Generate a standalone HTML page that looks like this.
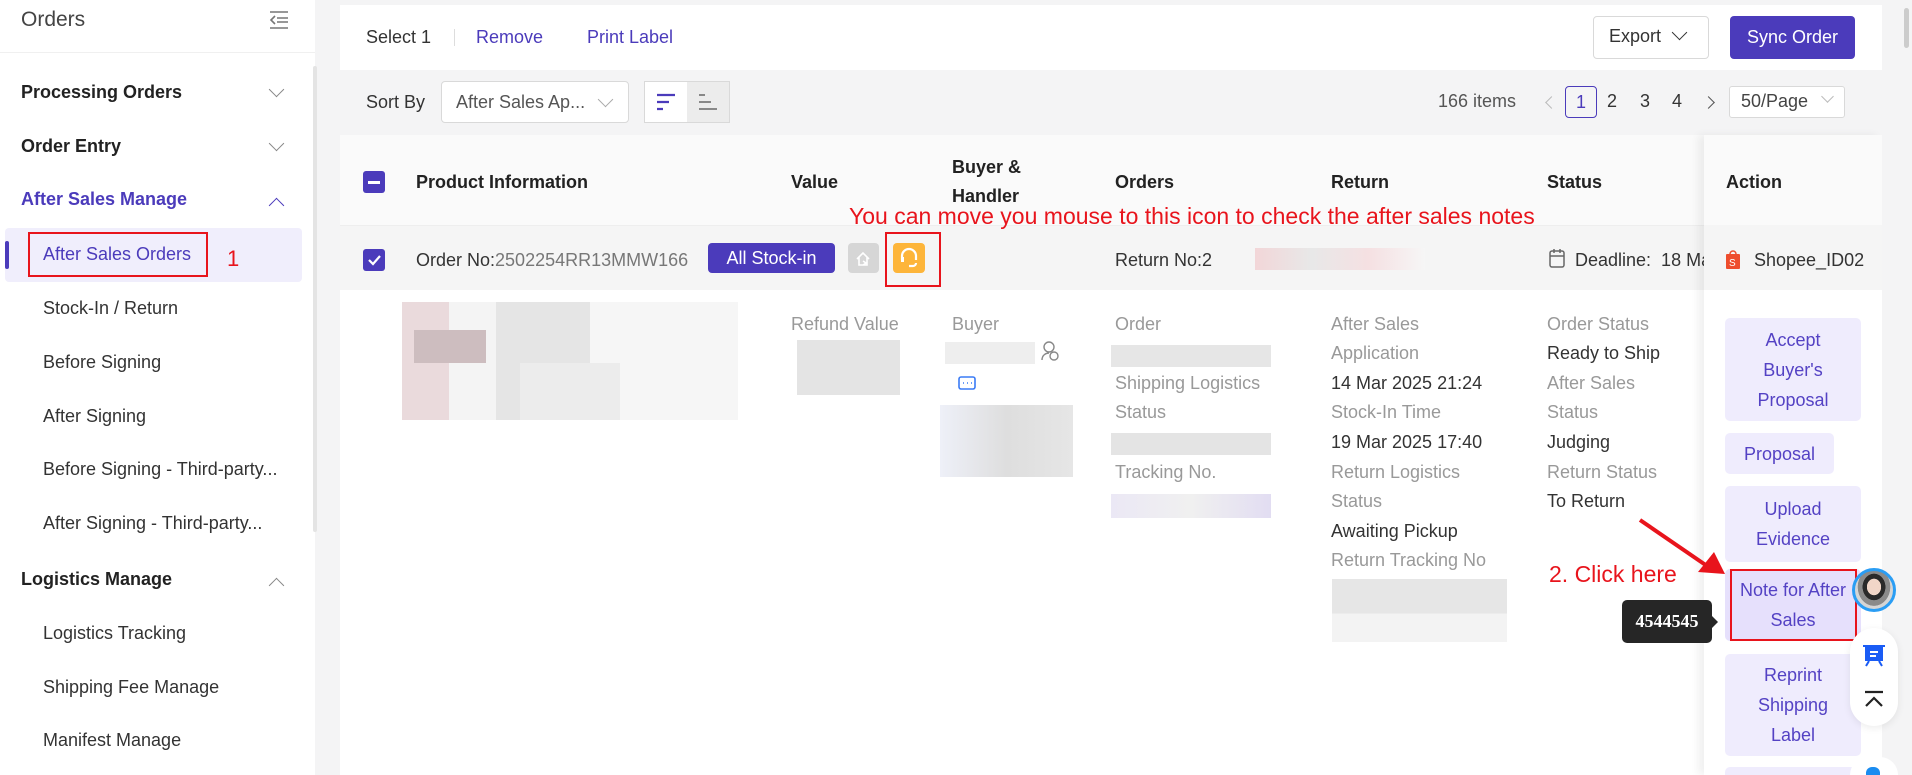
<!DOCTYPE html>
<html style="width:1912px;height:775px;overflow:hidden"><head><meta charset="utf-8">
<style>
*{margin:0;padding:0;box-sizing:border-box}
body{width:1912px;height:775px;overflow:hidden;background:#f4f4f5;font-family:"Liberation Sans",sans-serif;color:#333;position:relative;font-size:18px}
.a{position:absolute;white-space:nowrap}
.sb{position:absolute;left:0;top:0;width:315px;height:775px;background:#fff}
.grp{font-weight:bold;color:#222;font-size:18px}
.it{font-size:18px;color:#333}
.chev{position:absolute;width:11px;height:11px;border-right:1.6px solid #888;border-bottom:1.6px solid #888}
.lbl{color:#999;font-size:18px}
.val{color:#333;font-size:18px}
.btn{position:absolute;background:#efecfd;color:#5442c4;border-radius:5px;font-size:18px;text-align:center;line-height:30px;display:flex;align-items:center;justify-content:center;flex-direction:column}
.blur{position:absolute}
.red{color:#e8141c}
</style></head><body>

<div class="sb">
 <div class="a" style="left:21px;top:8px;font-size:21px;color:#444">Orders</div>
 <svg class="a" style="left:268px;top:10px" width="22" height="20" viewBox="0 0 22 20"><path d="M2 2h18M9 8h11M9 12h11M2 18h18M7 6l-4 4 4 4" stroke="#777" stroke-width="1.6" fill="none"/></svg>
 <div class="a" style="left:0;top:52px;width:315px;height:1px;background:#f0f0f0"></div>
 <div class="a" style="left:313px;top:66px;width:4px;height:466px;background:#e4e4e4;border-radius:2px"></div>
 <div class="a grp" style="left:21px;top:82px">Processing Orders</div><div class="chev" style="left:271px;top:84px;transform:rotate(45deg)"></div>
 <div class="a grp" style="left:21px;top:136px">Order Entry</div><div class="chev" style="left:271px;top:138px;transform:rotate(45deg)"></div>
 <div class="a grp" style="left:21px;top:189px;color:#4b3bbb">After Sales Manage</div><div class="chev" style="left:271px;top:200px;transform:rotate(-135deg);border-color:#4b3bbb"></div>
 <div class="a" style="left:5px;top:228px;width:297px;height:54px;background:#f0eefc;border-radius:4px"></div>
 <div class="a" style="left:5px;top:241px;width:4px;height:28px;background:#4b3bbb;border-radius:2px"></div>
 <div class="a" style="left:28px;top:232px;width:180px;height:45px;border:2px solid #e8141c"></div>
 <div class="a it" style="left:43px;top:244px;color:#4b3bbb">After Sales Orders</div>
 <div class="a red" style="left:227px;top:246px;font-size:22px">1</div>
 <div class="a it" style="left:43px;top:298px">Stock-In / Return</div>
 <div class="a it" style="left:43px;top:352px">Before Signing</div>
 <div class="a it" style="left:43px;top:406px">After Signing</div>
 <div class="a it" style="left:43px;top:459px">Before Signing - Third-party...</div>
 <div class="a it" style="left:43px;top:513px">After Signing - Third-party...</div>
 <div class="a grp" style="left:21px;top:569px">Logistics Manage</div><div class="chev" style="left:271px;top:580px;transform:rotate(-135deg)"></div>
 <div class="a it" style="left:43px;top:623px">Logistics Tracking</div>
 <div class="a it" style="left:43px;top:677px">Shipping Fee Manage</div>
 <div class="a it" style="left:43px;top:730px">Manifest Manage</div>
</div>

<div class="a" style="left:340px;top:5px;width:1542px;height:65px;background:#fff"></div>
<div class="a" style="left:366px;top:27px">Select 1</div>
<div class="a" style="left:454px;top:29px;width:1px;height:17px;background:#ddd"></div>
<div class="a" style="left:476px;top:27px;color:#4b3bbb">Remove</div>
<div class="a" style="left:587px;top:27px;color:#4b3bbb">Print Label</div>
<div class="a" style="left:1593px;top:16px;width:116px;height:43px;border:1px solid #d9d9d9;border-radius:4px;background:#fff"></div>
<div class="a" style="left:1609px;top:26px">Export</div><div class="chev" style="left:1674px;top:27px;transform:rotate(45deg);border-color:#333"></div>
<div class="a" style="left:1730px;top:16px;width:125px;height:43px;background:#4b3bbb;border-radius:4px;color:#fff;text-align:center;line-height:43px">Sync Order</div>

<div class="a" style="left:366px;top:92px">Sort By</div>
<div class="a" style="left:441px;top:81px;width:188px;height:42px;border:1px solid #d9d9d9;border-radius:4px;background:#fff"></div>
<div class="a" style="left:456px;top:92px;color:#555">After Sales Ap...</div><div class="chev" style="left:600px;top:94px;transform:rotate(45deg);border-color:#aaa"></div>
<div class="a" style="left:644px;top:81px;width:86px;height:42px;border:1px solid #d9d9d9;background:#fff"></div>
<div class="a" style="left:687px;top:82px;width:42px;height:40px;background:#ececec"></div>
<svg class="a" style="left:655px;top:93px" width="22" height="18"><path d="M2 2h18M2 9h12M2 16h6" stroke="#4b3bbb" stroke-width="2.2"/></svg>
<svg class="a" style="left:697px;top:93px" width="22" height="18"><path d="M2 2h6M2 9h12M2 16h18" stroke="#888" stroke-width="2"/></svg>
<div class="a" style="left:1438px;top:91px;color:#555">166 items</div>
<div class="chev" style="left:1547px;top:98px;transform:rotate(135deg);border-color:#bbb;width:9px;height:9px"></div>
<div class="a" style="left:1565px;top:86px;width:32px;height:32px;border:1.5px solid #4b3bbb;border-radius:4px;text-align:center;line-height:30px;color:#4b3bbb">1</div>
<div class="a" style="left:1607px;top:91px">2</div><div class="a" style="left:1640px;top:91px">3</div><div class="a" style="left:1672px;top:91px">4</div>
<div class="chev" style="left:1704px;top:98px;transform:rotate(-45deg);border-color:#555;width:9px;height:9px"></div>
<div class="a" style="left:1729px;top:86px;width:116px;height:32px;border:1px solid #d9d9d9;border-radius:3px;background:#fff"></div>
<div class="a" style="left:1741px;top:91px;color:#444">50/Page</div><div class="chev" style="left:1823px;top:92px;transform:rotate(45deg);border-color:#bbb;width:9px;height:9px"></div>

<div class="a" style="left:340px;top:135px;width:1542px;height:640px;background:#fff"></div>
<div class="a" style="left:340px;top:135px;width:1542px;height:90px;background:#fafafa"></div>
<div class="a" style="left:340px;top:225px;width:1542px;height:65px;background:#f5f5f5;border-top:1px solid #eee"></div>
<div class="a" style="left:363px;top:171px;width:22px;height:22px;background:#4b3bbb;border-radius:3px"><div style="position:absolute;left:5px;top:10px;width:12px;height:2.5px;background:#fff"></div></div>
<div class="a" style="left:416px;top:172px;font-weight:bold;color:#222">Product Information</div>
<div class="a" style="left:791px;top:172px;font-weight:bold;color:#222">Value</div>
<div class="a" style="left:952px;top:157px;font-weight:bold;color:#222">Buyer &amp;</div>
<div class="a" style="left:952px;top:186px;font-weight:bold;color:#222">Handler</div>
<div class="a" style="left:1115px;top:172px;font-weight:bold;color:#222">Orders</div>
<div class="a" style="left:1331px;top:172px;font-weight:bold;color:#222">Return</div>
<div class="a" style="left:1547px;top:172px;font-weight:bold;color:#222">Status</div>

<div class="a" style="left:363px;top:249px;width:22px;height:22px;background:#4b3bbb;border-radius:3px"><svg width="22" height="22"><path d="M6 11l4 4 7-8" stroke="#fff" stroke-width="2.2" fill="none"/></svg></div>
<div class="a" style="left:416px;top:250px">Order No:<span style="color:#777">2502254RR13MMW166</span></div>
<div class="a" style="left:708px;top:243px;width:127px;height:30px;background:#4b3bbb;border-radius:4px;color:#fff;text-align:center;line-height:30px">All Stock-in</div>
<div class="a" style="left:848px;top:243px;width:31px;height:30px;background:#d6d6d6;border-radius:4px"><svg width="31" height="30"><path d="M9 16l6-6 6 6M11 14v8h8v-8M15 18l3 2-3 2" stroke="#fff" stroke-width="1.6" fill="none"/></svg></div>
<div class="a" style="left:893px;top:243px;width:32px;height:30px;background:#fdb53a;border-radius:4px"><svg width="32" height="30"><path d="M9 17v-4a7 7 0 0114 0v4M16 23h4a3 3 0 003-3" stroke="#fff" stroke-width="2.2" fill="none"/><rect x="8" y="14" width="3" height="5" fill="#fff"/></svg></div>
<div class="a" style="left:885px;top:232px;width:56px;height:55px;border:2px solid #e8141c"></div>
<div class="a" style="left:1115px;top:250px">Return No:2</div>
<div class="blur" style="left:1255px;top:248px;width:170px;height:22px;background:linear-gradient(90deg,#f2d6d8,#e8e8e8,#f5e0e2,#f6f6f6)"></div>
<svg class="a" style="left:1548px;top:247px" width="18" height="22"><rect x="2" y="4" width="14" height="16" rx="2" stroke="#666" stroke-width="1.5" fill="none"/><path d="M2 9h14M6 2v4M12 2v4" stroke="#666" stroke-width="1.5"/></svg>
<div class="a" style="left:1575px;top:250px;width:129px;overflow:hidden">Deadline:&nbsp; 18 Mar</div>
<div class="a red" style="left:849px;top:203px;font-size:23px">You can move you mouse to this icon to check the after sales notes</div>

<div class="blur" style="left:402px;top:302px;width:336px;height:118px;background:linear-gradient(90deg,#e8d6d8 0 14%,#f3f3f3 14% 28%,#e2e2e2 28% 56%,#f5f5f5 56%);opacity:.9"></div>
<div class="blur" style="left:414px;top:330px;width:72px;height:33px;background:#cdbdbf"></div>
<div class="blur" style="left:520px;top:363px;width:100px;height:57px;background:#ececec"></div>
<div class="a lbl" style="left:791px;top:314px">Refund Value</div>
<div class="blur" style="left:797px;top:340px;width:103px;height:55px;background:#e4e4e4"></div>
<div class="a lbl" style="left:952px;top:314px">Buyer</div>
<div class="blur" style="left:945px;top:342px;width:90px;height:22px;background:#eee"></div>
<svg class="a" style="left:1040px;top:340px" width="20" height="22"><circle cx="9" cy="7" r="5" stroke="#888" stroke-width="1.4" fill="none"/><path d="M2 20c0-5 4-7 7-7" stroke="#888" stroke-width="1.4" fill="none"/><circle cx="14" cy="16" r="4" stroke="#888" stroke-width="1.4" fill="none"/></svg>
<svg class="a" style="left:958px;top:376px" width="18" height="16"><rect x="1" y="1" width="16" height="12" rx="2" stroke="#3a7bf5" stroke-width="1.6" fill="none"/><path d="M5 7h1M9 7h1M13 7h1" stroke="#3a7bf5" stroke-width="1.6"/></svg>
<div class="blur" style="left:940px;top:405px;width:133px;height:72px;background:linear-gradient(90deg,#eef0f8,#dedede,#e6e6e6)"></div>

<div class="a lbl" style="left:1115px;top:314px">Order</div>
<div class="blur" style="left:1111px;top:345px;width:160px;height:22px;background:#e6e6e6"></div>
<div class="a lbl" style="left:1115px;top:373px">Shipping Logistics</div>
<div class="a lbl" style="left:1115px;top:402px">Status</div>
<div class="blur" style="left:1111px;top:433px;width:160px;height:22px;background:#e4e4e4"></div>
<div class="a lbl" style="left:1115px;top:462px">Tracking No.</div>
<div class="blur" style="left:1111px;top:494px;width:160px;height:24px;background:linear-gradient(90deg,#ebe8f5,#f0f0f0,#e2ddf2)"></div>

<div class="a lbl" style="left:1331px;top:314px">After Sales</div>
<div class="a lbl" style="left:1331px;top:343px">Application</div>
<div class="a val" style="left:1331px;top:373px">14 Mar 2025 21:24</div>
<div class="a lbl" style="left:1331px;top:402px">Stock-In Time</div>
<div class="a val" style="left:1331px;top:432px">19 Mar 2025 17:40</div>
<div class="a lbl" style="left:1331px;top:462px">Return Logistics</div>
<div class="a lbl" style="left:1331px;top:491px">Status</div>
<div class="a val" style="left:1331px;top:521px">Awaiting Pickup</div>
<div class="a lbl" style="left:1331px;top:550px">Return Tracking No</div>
<div class="blur" style="left:1332px;top:579px;width:175px;height:63px;background:linear-gradient(180deg,#e6e6e6 0 55%,#f3f3f3 55%)"></div>

<div class="a lbl" style="left:1547px;top:314px">Order Status</div>
<div class="a val" style="left:1547px;top:343px">Ready to Ship</div>
<div class="a lbl" style="left:1547px;top:373px">After Sales</div>
<div class="a lbl" style="left:1547px;top:402px">Status</div>
<div class="a val" style="left:1547px;top:432px">Judging</div>
<div class="a lbl" style="left:1547px;top:462px">Return Status</div>
<div class="a val" style="left:1547px;top:491px">To Return</div>

<div class="a" style="left:1704px;top:135px;width:178px;height:640px;background:#fff;box-shadow:-6px 0 8px rgba(0,0,0,.06)"></div>
<div class="a" style="left:1704px;top:135px;width:178px;height:90px;background:#fafafa"></div>
<div class="a" style="left:1704px;top:225px;width:178px;height:65px;background:#f5f5f5"></div>
<div class="a" style="left:1726px;top:172px;font-weight:bold;color:#222">Action</div>
<svg class="a" style="left:1725px;top:248px" width="16" height="22"><path d="M5 6a3 3 0 016 0" stroke="#ee4d2d" stroke-width="1.5" fill="none"/><rect x="1" y="6" width="14" height="15" rx="1" fill="#ee4d2d"/><text x="4" y="18" font-size="10" fill="#fff" font-family="Liberation Sans">S</text></svg>
<div class="a" style="left:1754px;top:250px">Shopee_ID02</div>
<div class="btn" style="left:1725px;top:318px;width:136px;height:103px"><div>Accept</div><div>Buyer's</div><div>Proposal</div></div>
<div class="btn" style="left:1725px;top:433px;width:109px;height:41px">Proposal</div>
<div class="btn" style="left:1725px;top:486px;width:136px;height:76px"><div>Upload</div><div>Evidence</div></div>
<div class="btn" style="left:1725px;top:569px;width:136px;height:72px;background:#e6e0fc;overflow:hidden"><div>Note for After</div><div>Sales</div></div>
<div class="a" style="left:1730px;top:569px;width:127px;height:72px;border:2px solid #e8141c"></div>
<div class="btn" style="left:1725px;top:654px;width:136px;height:102px"><div>Reprint</div><div>Shipping</div><div>Label</div></div>
<div class="btn" style="left:1725px;top:767px;width:136px;height:8px;border-radius:5px 5px 0 0"></div>

<div class="a red" style="left:1549px;top:561px;font-size:23px">2. Click here</div>
<svg class="a" style="left:1630px;top:512px" width="100" height="70"><path d="M10 8L80 56" stroke="#e8141c" stroke-width="4"/><path d="M95 62L68 60L84 40Z" fill="#e8141c"/></svg>
<div class="a" style="left:1622px;top:600px;width:90px;height:43px;background:#262626;border-radius:5px;color:#fff;text-align:center;line-height:43px;font-size:18px;font-family:'Liberation Serif',serif;font-weight:bold">4544545</div>
<div class="a" style="left:1712px;top:616px;width:0;height:0;border-left:6px solid #262626;border-top:6px solid transparent;border-bottom:6px solid transparent"></div>

<div class="a" style="left:1852px;top:568px;width:44px;height:44px;border-radius:50%;border:3px solid #2a9df4;background:radial-gradient(ellipse at 50% 42%,#f1d6c8 0 26%,#2a2a2a 27% 42%,#8a8a8a 43% 60%,#d5d5d5 61%)"></div>
<div class="a" style="left:1850px;top:628px;width:48px;height:98px;background:#fff;border-radius:24px;box-shadow:0 2px 8px rgba(0,0,0,.08)"></div>
<svg class="a" style="left:1862px;top:642px" width="24" height="26"><rect x="3" y="4" width="18" height="15" fill="#1a5cf5"/><path d="M1 4h22M7 19l-3 5M17 19l3 5" stroke="#1a5cf5" stroke-width="2"/><path d="M8 10h8M8 14h6" stroke="#fff" stroke-width="2"/></svg>
<svg class="a" style="left:1862px;top:690px" width="24" height="20"><path d="M3 2h18M4 16l8-8 8 8" stroke="#222" stroke-width="2.2" fill="none"/></svg>
<div class="a" style="left:1850px;top:757px;width:48px;height:18px;background:#fff;border-radius:24px 24px 0 0"></div>
<div class="a" style="left:1866px;top:767px;width:14px;height:8px;background:#1a8cf0;border-radius:6px 6px 0 0"></div>
<div class="a" style="left:1904px;top:8px;width:5px;height:40px;background:#ccc;border-radius:3px"></div>
</body></html>
